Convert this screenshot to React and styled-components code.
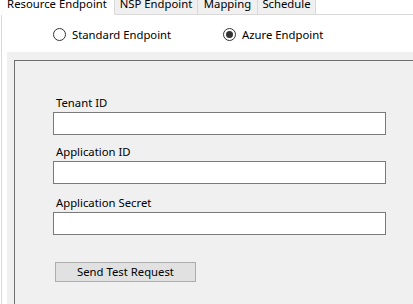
import React from 'react';
import styled, { createGlobalStyle } from 'styled-components';

const GlobalStyle = createGlobalStyle`
  html, body {
    margin: 0;
    padding: 0;
    background: #ffffff;
  }
  body {
    font-family: "Noto Sans", "Liberation Sans", sans-serif;
    font-size: 11.3px;
    color: #000000;
  }
`;

const Window = styled.div`
  width: 413px;
  height: 304px;
  overflow: hidden;
  background: #ffffff;
  display: flex;
  flex-direction: column;
`;

const TabStrip = styled.div`
  display: flex;
  height: 15px;
  flex-shrink: 0;
`;

const Tab = styled.div`
  width: ${(p) => p.width}px;
  height: 15px;
  box-sizing: border-box;
  overflow: hidden;
  background: ${(p) => (p.active ? '#ffffff' : '#f0f0f0')};
  border-right: 1px solid #d9d9d9;
  border-bottom: 1px solid ${(p) => (p.active ? '#ffffff' : '#d9d9d9')};
  display: flex;
  justify-content: center;
`;

const TabLabel = styled.span`
  line-height: 16px;
  margin-top: -4px;
  white-space: nowrap;
`;

const TabFiller = styled.div`
  flex: 1;
  height: 15px;
  box-sizing: border-box;
  border-bottom: 1px solid #d9d9d9;
`;

const Page = styled.div`
  flex: 1;
  margin-left: 1px;
  border-left: 1px solid #d9d9d9;
  display: flex;
  flex-direction: column;
`;

const RadioRow = styled.div`
  display: flex;
  align-items: center;
  height: 13px;
  margin-top: 13px;
  padding-left: 51px;
`;

const RadioOption = styled.label`
  display: flex;
  align-items: center;
  gap: 6px;
  width: ${(p) => p.width}px;
  white-space: nowrap;
`;

const RadioCircle = styled.span`
  width: 13px;
  height: 13px;
  box-sizing: border-box;
  border: 1px solid #333333;
  border-radius: 50%;
  background: #ffffff;
  display: flex;
  align-items: center;
  justify-content: center;

  &::after {
    content: '';
    display: ${(p) => (p.checked ? 'block' : 'none')};
    width: 7px;
    height: 7px;
    border-radius: 50%;
    background: #333333;
  }
`;

const Panel = styled.div`
  flex: 1;
  margin-top: 11px;
  margin-left: 5px;
  background: #f0f0f0;
  padding: 8px 0 0 7px;
  display: flex;
`;

const GroupBox = styled.div`
  flex: 1;
  border: 1px solid #6e6e6e;
  border-right: none;
  border-bottom: none;
  padding: 33px 0 0 38px;
`;

const Field = styled.div`
  display: flex;
  flex-direction: column;
  margin-top: ${(p) => p.gap}px;
`;

const Label = styled.span`
  line-height: 15px;
  padding: 1px 0 0 3px;
  margin-bottom: 2px;
`;

const TextBox = styled.input`
  width: 333px;
  height: 23px;
  box-sizing: border-box;
  border: 1px solid #7a7a7a;
  background: #ffffff;
  margin: 0;
  padding: 0 3px;
  font: inherit;
  outline: none;
`;

const Button = styled.button`
  width: 141px;
  height: 20px;
  box-sizing: border-box;
  margin: 27px 0 0 2px;
  padding: 0;
  border: 1px solid #adadad;
  background: #e1e1e1;
  font: inherit;
  color: #000000;
  line-height: 16px;
`;

const tabs = [
  { label: 'Resource Endpoint', width: 115, active: true },
  { label: 'NSP Endpoint', width: 83 },
  { label: 'Mapping', width: 60 },
  { label: 'Schedule', width: 58 },
];

const fields = [
  { label: 'Tenant ID', gap: 0 },
  { label: 'Application ID', gap: 8 },
  { label: 'Application Secret', gap: 10 },
];

export default function App() {
  return (
    <Window>
      <GlobalStyle />
      <TabStrip>
        {tabs.map((t) => (
          <Tab key={t.label} width={t.width} active={t.active}>
            <TabLabel>{t.label}</TabLabel>
          </Tab>
        ))}
        <TabFiller />
      </TabStrip>
      <Page>
        <RadioRow>
          <RadioOption width={170}>
            <RadioCircle />
            Standard Endpoint
          </RadioOption>
          <RadioOption width={120}>
            <RadioCircle checked />
            Azure Endpoint
          </RadioOption>
        </RadioRow>
        <Panel>
          <GroupBox>
            {fields.map((f) => (
              <Field key={f.label} gap={f.gap}>
                <Label>{f.label}</Label>
                <TextBox type="text" />
              </Field>
            ))}
            <Button type="button">Send Test Request</Button>
          </GroupBox>
        </Panel>
      </Page>
    </Window>
  );
}
